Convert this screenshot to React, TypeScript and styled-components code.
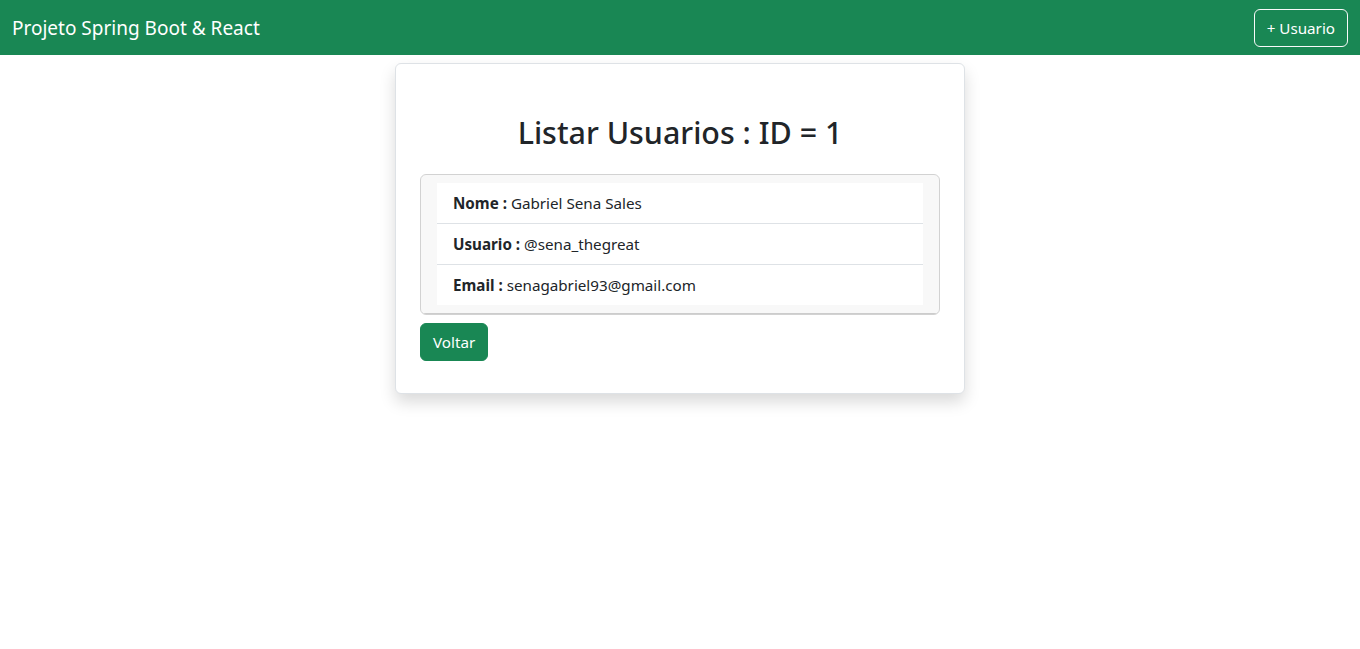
import React from "react";
import styled, { createGlobalStyle } from "styled-components";

const Global = createGlobalStyle`
  *, *::before, *::after { box-sizing: border-box; }
  body {
    margin: 0;
    font-family: "Noto Sans", "Open Sans", sans-serif;
    font-size: 15.2px;
    line-height: 24px;
    color: #212529;
    background: #fff;
  }
`;

const NavBar = styled.nav`
  height: 55px;
  background: #198754;
  display: flex;
  align-items: center;
  justify-content: space-between;
  padding: 0 12px;
`;

const Brand = styled.a`
  color: #fff;
  font-size: 19px;
  line-height: 30px;
  text-decoration: none;
`;

const OutlineButton = styled.button`
  font-family: inherit;
  font-size: 15.2px;
  line-height: 24px;
  color: #fff;
  background: transparent;
  border: 1px solid #f8f9fa;
  border-radius: 6px;
  padding: 6px 12px;
  cursor: pointer;
`;

const Container = styled.div`
  width: 1140px;
  margin: 0 auto;
  padding-bottom: 40px;
  display: flex;
  justify-content: center;
`;

const Panel = styled.div`
  width: 570px;
  margin-top: 8px;
  padding: 24px;
  border: 1px solid #dee2e6;
  border-radius: 6px;
  background: #fff;
  box-shadow: 0 8px 16px rgba(0, 0, 0, 0.15);
`;

const Title = styled.h2`
  margin: 26px 24px 22px;
  font-size: 30.4px;
  font-weight: 500;
  line-height: 38px;
  text-align: center;
`;

const Card = styled.div`
  border: 1px solid rgba(0, 0, 0, 0.175);
  border-radius: 6px;
  overflow: hidden;
`;

const CardHeader = styled.div`
  background: rgba(33, 37, 41, 0.03);
  padding: 8px 16px;
  border-bottom: 1px solid rgba(0, 0, 0, 0.175);
`;

const List = styled.ul`
  list-style: none;
  margin: 0;
  padding: 0;
`;

const Item = styled.li`
  background: #fff;
  padding: 8px 16px;
  border-bottom: 1px solid #dee2e6;
  &:last-child { border-bottom: 0; }
`;

const SolidButton = styled.button`
  font-family: inherit;
  font-size: 15.2px;
  line-height: 24px;
  color: #fff;
  background: #198754;
  border: 1px solid #198754;
  border-radius: 6px;
  padding: 6px 12px;
  margin: 8px 0;
  cursor: pointer;
`;

const rows = [
  ["Nome", "Gabriel Sena Sales"],
  ["Usuario", "@sena_thegreat"],
  ["Email", "senagabriel93@gmail.com"],
];

export default function App() {
  return (
    <>
      <Global />
      <NavBar>
        <Brand href="#">Projeto Spring Boot &amp; React</Brand>
        <OutlineButton>+ Usuario</OutlineButton>
      </NavBar>
      <Container>
        <Panel>
          <Title>Listar Usuarios : ID = 1</Title>
          <Card>
            <CardHeader>
              <List>
                {rows.map(([k, v]) => (
                  <Item key={k}>
                    <b>{k} :</b> {v}
                  </Item>
                ))}
              </List>
            </CardHeader>
          </Card>
          <SolidButton>Voltar</SolidButton>
        </Panel>
      </Container>
    </>
  );
}
